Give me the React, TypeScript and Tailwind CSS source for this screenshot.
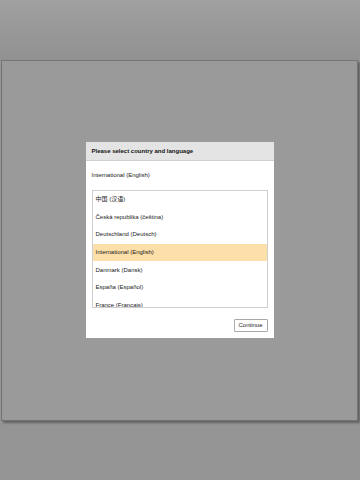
const countries = [
  "中国 (汉语)",
  "Česká republika (čeština)",
  "Deutschland (Deutsch)",
  "International (English)",
  "Danmark (Dansk)",
  "España (Español)",
  "France (Français)",
];

const selected = "International (English)";

export default function App() {
  return (
    <div
      className="flex h-[480px] w-[360px] flex-col overflow-hidden bg-[#959595]"
      style={{ fontFamily: '"Liberation Sans", Arial, "Noto Sans CJK SC", sans-serif' }}
    >
      {/* Top bar */}
      <div className="h-[60px] shrink-0 bg-gradient-to-b from-[#a0a0a0] to-[#919191]" />

      {/* Backdrop panel */}
      <div className="ml-[1px] flex h-[361px] w-[357px] shrink-0 items-center justify-center border border-[#747474] bg-[#9a9a9a] shadow-[2px_2px_2px_rgba(0,0,0,0.35)]">
        <div className="mt-[-2px] flex w-[188px] flex-col bg-white text-[6px] text-[#1a1a1a]">
          <div className="flex h-[19px] items-center border-b border-[#d0d0d0] bg-[#e4e4e4] px-[6px] pt-[1px] font-bold text-[#111]">
            Please select country and language
          </div>

          <div className="flex h-[29px] items-center px-[6px]">{selected}</div>

          <div className="mx-[6px] h-[118px] overflow-hidden border border-[#cfcfcf]">
            {countries.map((c) => (
              <div
                key={c}
                className={`flex h-[17.7px] items-center px-[3px] ${
                  c === selected ? "bg-[#fddfa9]" : ""
                }`}
              >
                {c}
              </div>
            ))}
          </div>

          <div className="flex justify-end px-[6px] pb-[6px] pt-[11px]">
            <button className="flex h-[13px] w-[34px] items-center justify-center rounded-[1px] border border-[#aaaaaa] bg-white text-[6px] text-[#222]">
              Continue
            </button>
          </div>
        </div>
      </div>
    </div>
  );
}
